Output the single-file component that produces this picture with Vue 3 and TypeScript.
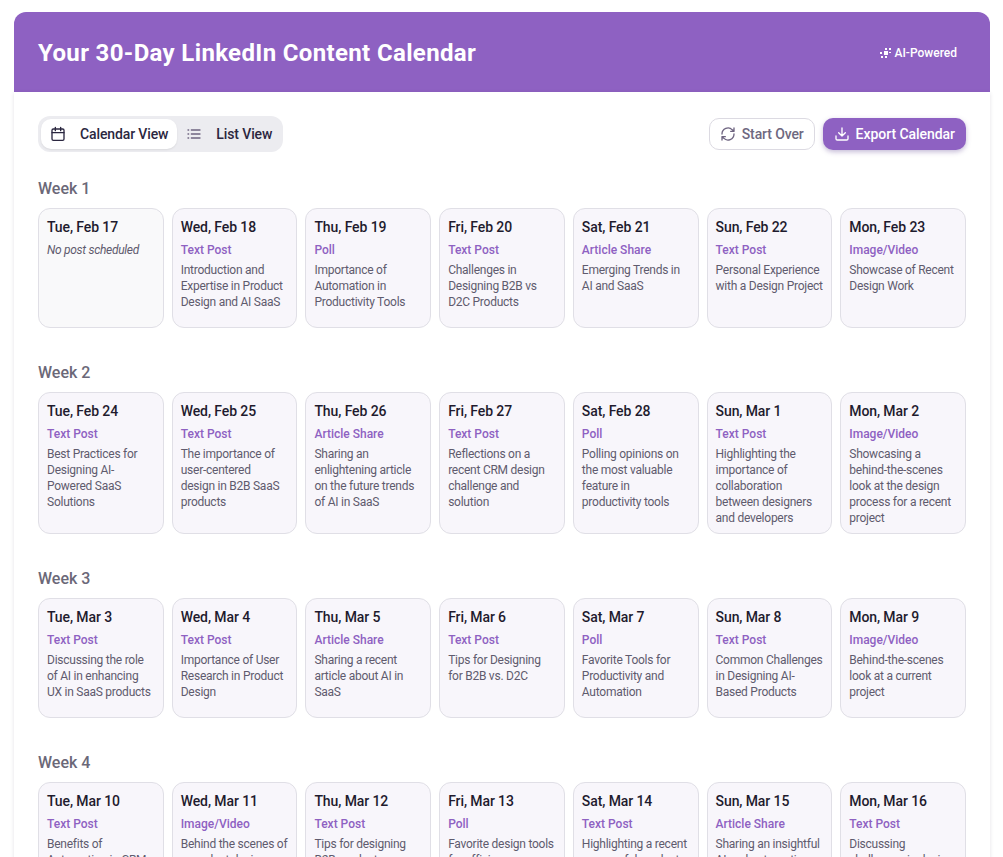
<template>
  <div class="page">
    <header class="banner">
      <h1>Your 30-Day LinkedIn Content Calendar</h1>
      <span class="badge">
        <svg width="12" height="12" viewBox="0 0 12 12" fill="#fff">
          <rect x="4" y="4" width="4" height="4" />
          <rect x="9" y="1" width="2" height="2" />
          <rect x="5" y="1" width="2" height="2" />
          <rect x="0" y="5" width="2" height="2" />
          <rect x="9" y="5" width="2" height="1" />
          <rect x="5" y="9" width="2" height="2" />
          <rect x="1" y="9" width="2" height="2" />
        </svg>
        AI-Powered
      </span>
    </header>

    <main class="panel">
      <div class="toolbar">
        <div class="toggle">
          <button class="tab active">
            <svg class="ic" viewBox="0 0 24 24"><rect x="3" y="4.5" width="18" height="17" rx="2" /><path d="M3 10h18M8 2v5M16 2v5" /></svg>
            <span>Calendar View</span>
          </button>
          <button class="tab">
            <svg class="ic muted" viewBox="0 0 24 24"><path d="M8 6h13M8 12h13M8 18h13M3 6h1M3 12h1M3 18h1" /></svg>
            <span>List View</span>
          </button>
        </div>
        <div class="actions">
          <button class="btn outline">
            <svg class="ic sm" viewBox="0 0 24 24"><path d="M3 12a9 9 0 0 1 15.5-6.2L21 8M21 3v5h-5M21 12a9 9 0 0 1-15.5 6.2L3 16M3 21v-5h5" /></svg>
            Start Over
          </button>
          <button class="btn primary">
            <svg class="ic sm" viewBox="0 0 24 24"><path d="M21 15v4a2 2 0 0 1-2 2H5a2 2 0 0 1-2-2v-4M7 10l5 5 5-5M12 15V3" /></svg>
            Export Calendar
          </button>
        </div>
      </div>

      <section v-for="week in weeks" :key="week.name" class="week">
        <h2>{{ week.name }}</h2>
        <div class="grid">
          <article v-for="d in week.days" :key="d.date" class="day" :class="{ empty: !d.type }">
            <div class="date">{{ d.date }}</div>
            <template v-if="d.type">
              <div class="type">{{ d.type }}</div>
              <p class="topic">{{ d.topic }}</p>
            </template>
            <div v-else class="none">No post scheduled</div>
          </article>
        </div>
      </section>
    </main>
  </div>
</template>

<script setup lang="ts">
type Day = { date: string; type?: string; topic?: string }

const d = (date: string, type?: string, topic?: string): Day => ({ date, type, topic })

const weeks: { name: string; days: Day[] }[] = [
  {
    name: 'Week 1',
    days: [
      d('Tue, Feb 17'),
      d('Wed, Feb 18', 'Text Post', 'Introduction and Expertise in Product Design and AI SaaS'),
      d('Thu, Feb 19', 'Poll', 'Importance of Automation in Productivity Tools'),
      d('Fri, Feb 20', 'Text Post', 'Challenges in Designing B2B vs D2C Products'),
      d('Sat, Feb 21', 'Article Share', 'Emerging Trends in AI and SaaS'),
      d('Sun, Feb 22', 'Text Post', 'Personal Experience with a Design Project'),
      d('Mon, Feb 23', 'Image/Video', 'Showcase of Recent Design Work')
    ]
  },
  {
    name: 'Week 2',
    days: [
      d('Tue, Feb 24', 'Text Post', 'Best Practices for Designing AI-Powered SaaS Solutions'),
      d('Wed, Feb 25', 'Text Post', 'The importance of user-centered\ndesign in B2B SaaS products'),
      d('Thu, Feb 26', 'Article Share', 'Sharing an enlightening article on the future trends of AI in SaaS'),
      d('Fri, Feb 27', 'Text Post', 'Reflections on a recent CRM design challenge and solution'),
      d('Sat, Feb 28', 'Poll', 'Polling opinions on the most valuable feature in productivity tools'),
      d('Sun, Mar 1', 'Text Post', 'Highlighting the importance of collaboration between designers and developers'),
      d('Mon, Mar 2', 'Image/Video', 'Showcasing a behind-the-scenes look at the design process for a recent project')
    ]
  },
  {
    name: 'Week 3',
    days: [
      d('Tue, Mar 3', 'Text Post', 'Discussing the role of AI in enhancing UX in SaaS products'),
      d('Wed, Mar 4', 'Text Post', 'Importance of User Research in Product Design'),
      d('Thu, Mar 5', 'Article Share', 'Sharing a recent article about AI in SaaS'),
      d('Fri, Mar 6', 'Text Post', 'Tips for Designing for B2B vs. D2C'),
      d('Sat, Mar 7', 'Poll', 'Favorite Tools for Productivity and Automation'),
      d('Sun, Mar 8', 'Text Post', 'Common Challenges in Designing AI-Based Products'),
      d('Mon, Mar 9', 'Image/Video', 'Behind-the-scenes look at a current project')
    ]
  },
  {
    name: 'Week 4',
    days: [
      d('Tue, Mar 10', 'Text Post', 'Benefits of Automation in CRM Systems'),
      d('Wed, Mar 11', 'Image/Video', 'Behind the scenes of a product design'),
      d('Thu, Mar 12', 'Text Post', 'Tips for designing B2B products'),
      d('Fri, Mar 13', 'Poll', 'Favorite design tools for efficiency'),
      d('Sat, Mar 14', 'Text Post', 'Highlighting a recent successful product launch'),
      d('Sun, Mar 15', 'Article Share', 'Sharing an insightful AI and automation article'),
      d('Mon, Mar 16', 'Text Post', 'Discussing challenges in design')
    ]
  }
]
</script>

<style scoped>
.page {
  padding: 12px 13px 24px 14px;
  font-family: Roboto, "Noto Sans", sans-serif;
  color: #1f1b2e;
}

.banner {
  display: flex;
  align-items: center;
  justify-content: space-between;
  height: 80px;
  padding: 2px 33px 0 24px;
  box-sizing: border-box;
  background: #8e61c2;
  border-radius: 12px 12px 0 0;
  color: #fff;
}

h1 {
  margin: 0;
  font-size: 24px;
  font-weight: 700;
  line-height: 32px;
  letter-spacing: 0.35px;
}

.badge {
  display: flex;
  align-items: center;
  gap: 3px;
  font-size: 12px;
  font-weight: 500;
}

.panel {
  padding: 24px;
  background: #fff;
  box-shadow: 0 1px 4px rgba(30, 20, 60, 0.12);
}

.toolbar {
  display: flex;
  align-items: center;
  justify-content: space-between;
  margin-bottom: 24px;
}

.toggle {
  display: flex;
  padding: 3px;
  background: #ececf0;
  border-radius: 12px;
}

.tab {
  display: flex;
  align-items: center;
  gap: 14px;
  height: 30px;
  padding: 0 8px 0 9px;
  background: none;
  border: 0;
  border-radius: 10px;
  font: 500 14px Roboto, sans-serif;
  letter-spacing: -0.12px;
  color: #2b2740;
}

.tab.active {
  padding-right: 9px;
  background: #fff;
  box-shadow: 0 1px 2px rgba(0, 0, 0, 0.08);
}

.ic {
  width: 16px;
  height: 16px;
  fill: none;
  stroke: #2b2740;
  stroke-width: 2;
  stroke-linecap: round;
  stroke-linejoin: round;
  flex: none;
}

.ic.muted {
  stroke: #6e6480;
}

.actions {
  display: flex;
  gap: 8px;
}

.btn {
  display: flex;
  align-items: center;
  gap: 6px;
  height: 32px;
  padding: 0 10px;
  border-radius: 10px;
  font: 500 14px Roboto, sans-serif;
}

.outline {
  background: #fff;
  border: 1px solid #dcdae2;
  letter-spacing: -0.12px;
  color: #6e6880;
}

.outline .ic {
  stroke: #6e6480;
}

.primary {
  padding: 0 11px;
  background: #8e61c2;
  border: 0;
  letter-spacing: -0.05px;
  color: #fff;
  box-shadow: 0 2px 5px rgba(90, 60, 140, 0.35);
}

.primary .ic {
  stroke: #fff;
}

.week {
  margin-bottom: 32px;
}

h2 {
  margin: 0 0 7px;
  padding-top: 1px;
  font-size: 16px;
  font-weight: 500;
  line-height: 24px;
  color: #6b6878;
}

.grid {
  display: grid;
  grid-template-columns: repeat(7, 1fr);
  gap: 8px;
}

.day {
  min-height: 120px;
  padding: 8px 8px 7px;
  box-sizing: border-box;
  background: #f8f6fb;
  border: 1px solid #e0dfe6;
  border-radius: 12px;
}

.day.empty {
  background: #f9f9fa;
}

.date {
  font-size: 14px;
  font-weight: 500;
  line-height: 20px;
  letter-spacing: -0.1px;
  color: #1f1b2e;
}

.type {
  margin-top: 5px;
  font-size: 12px;
  font-weight: 500;
  line-height: 16px;
  color: #8e61c2;
}

.topic {
  margin: 4px -1px 0 0;
  font-size: 12px;
  line-height: 16px;
  letter-spacing: -0.25px;
  white-space: pre-line;
  color: #5f5b6e;
}

.none {
  margin-top: 5px;
  font-size: 12px;
  font-style: italic;
  line-height: 16px;
  letter-spacing: -0.3px;
  color: #5f5b6e;
}
</style>

<style>
body {
  background: #fff;
}
</style>
